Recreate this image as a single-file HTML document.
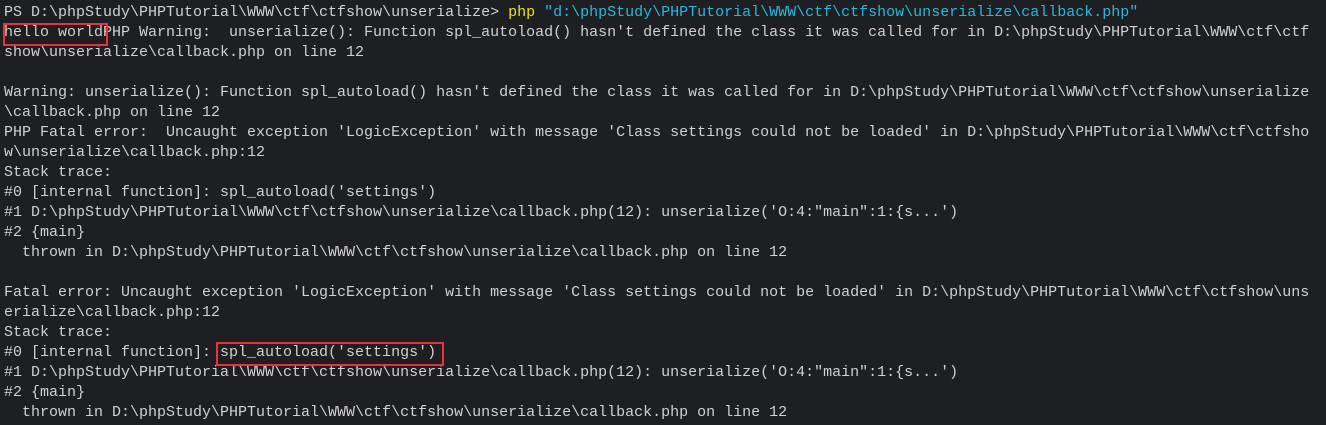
<!DOCTYPE html>
<html><head><meta charset="utf-8"><style>
html,body{margin:0;padding:0;background:#1e1f22;}
body{width:1326px;height:425px;overflow:hidden;position:relative;}
pre{margin:0;position:absolute;left:4px;top:3px;font-family:"Liberation Mono",monospace;font-size:15px;line-height:20px;color:#d0d0d0;letter-spacing:0;white-space:pre;}
.y{color:#e5e510}.c{color:#29b8db}
.box{position:absolute;border:2px solid #e8333a;box-sizing:border-box;}
</style></head><body>
<pre>PS D:\phpStudy\PHPTutorial\WWW\ctf\ctfshow\unserialize&gt; <span class="y">php</span> <span class="c">"d:\phpStudy\PHPTutorial\WWW\ctf\ctfshow\unserialize\callback.php"</span>
hello worldPHP Warning:  unserialize(): Function spl_autoload() hasn't defined the class it was called for in D:\phpStudy\PHPTutorial\WWW\ctf\ctf
show\unserialize\callback.php on line 12

Warning: unserialize(): Function spl_autoload() hasn't defined the class it was called for in D:\phpStudy\PHPTutorial\WWW\ctf\ctfshow\unserialize
\callback.php on line 12
PHP Fatal error:  Uncaught exception 'LogicException' with message 'Class settings could not be loaded' in D:\phpStudy\PHPTutorial\WWW\ctf\ctfsho
w\unserialize\callback.php:12
Stack trace:
#0 [internal function]: spl_autoload('settings')
#1 D:\phpStudy\PHPTutorial\WWW\ctf\ctfshow\unserialize\callback.php(12): unserialize('O:4:"main":1:{s...')
#2 {main}
  thrown in D:\phpStudy\PHPTutorial\WWW\ctf\ctfshow\unserialize\callback.php on line 12

Fatal error: Uncaught exception 'LogicException' with message 'Class settings could not be loaded' in D:\phpStudy\PHPTutorial\WWW\ctf\ctfshow\uns
erialize\callback.php:12
Stack trace:
#0 [internal function]: spl_autoload('settings')
#1 D:\phpStudy\PHPTutorial\WWW\ctf\ctfshow\unserialize\callback.php(12): unserialize('O:4:"main":1:{s...')
#2 {main}
  thrown in D:\phpStudy\PHPTutorial\WWW\ctf\ctfshow\unserialize\callback.php on line 12</pre>
<div class="box" style="left:3px;top:23px;width:105px;height:23px"></div>
<div class="box" style="left:216px;top:342px;width:228px;height:24px"></div>
</body></html>
